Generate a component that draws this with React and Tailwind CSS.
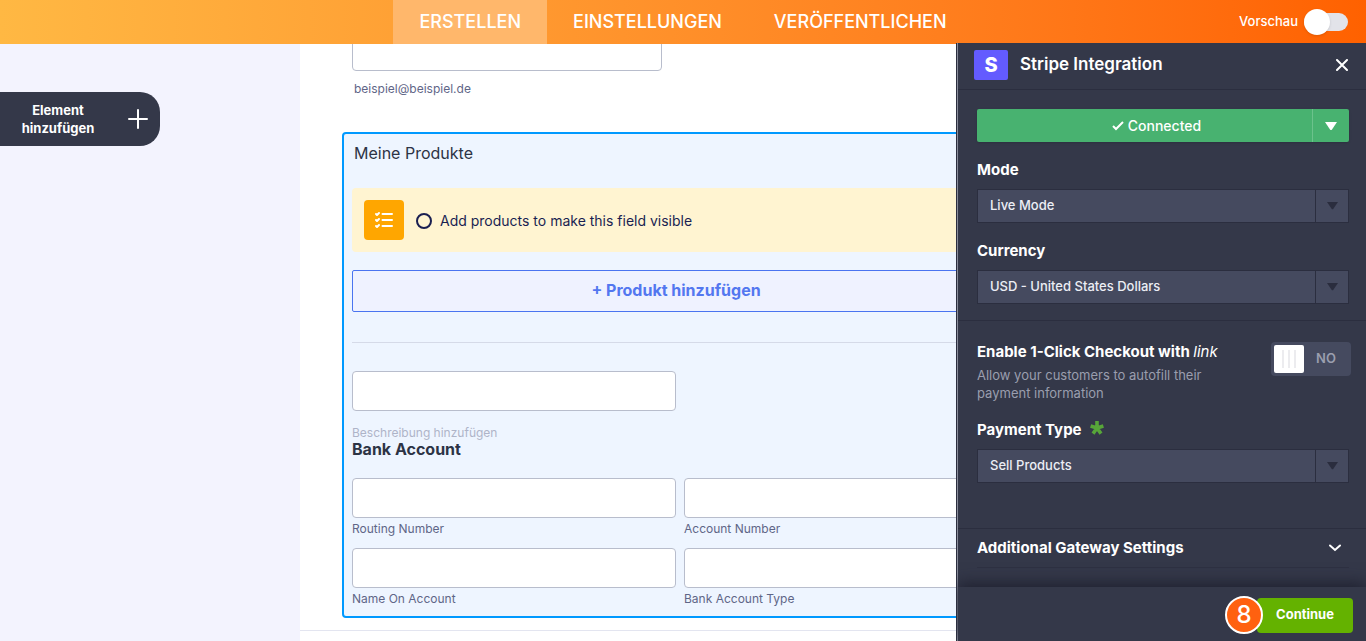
import React, { useState } from "react";

function Caret({ className }) {
  return (
    <svg viewBox="0 0 12 8" className={className} aria-hidden="true">
      <path d="M0 0h12L7 7.400a1.300 1.300 0 0 1-2 0z" fill="currentColor" />
    </svg>
  );
}

function TextField({ id, label, hidden }) {
  return (
    <div className="flex flex-col">
      <input
        id={id}
        type="text"
        aria-label={hidden ? label : undefined}
        className="h-10 w-full rounded border border-[#b8bdcc] bg-white px-2"
      />
      {!hidden && (
        <label htmlFor={id} className="pt-[3px] text-xs leading-4 text-[#5f6687]">
          {label}
        </label>
      )}
    </div>
  );
}

function PanelSelect({ id, options }) {
  return (
    <div className="relative flex h-[34px] border border-[#2b2e3f] bg-[#454a5f]">
      <select
        id={id}
        className="w-full appearance-none bg-transparent pl-3 pr-10 text-[13px] font-medium text-[#eceef5]"
      >
        {options.map((option) => (
          <option key={option}>{option}</option>
        ))}
      </select>
      <span className="pointer-events-none absolute inset-y-0 right-0 flex w-[33px] items-center justify-center border-l border-[#2b2e3f] text-[#2a2d3e]">
        <Caret className="w-[11px]" />
      </span>
    </div>
  );
}

function Header() {
  const [preview, setPreview] = useState(false);

  return (
    <header className="relative flex h-11 shrink-0 items-center justify-center bg-linear-to-r from-[#ffb843] to-[#ff6100]">
      <nav className="flex h-full text-lg font-medium text-white">
        <a href="#build" className="flex items-center bg-[#ffb76b] px-[26px]">
          ERSTELLEN
        </a>
        <a href="#settings" className="flex items-center px-[26px]">
          EINSTELLUNGEN
        </a>
        <a href="#publish" className="flex items-center px-[26px]">
          VERÖFFENTLICHEN
        </a>
      </nav>
      <label className="absolute inset-y-0 right-[18px] flex items-center gap-1.5 text-[13px] font-medium text-white">
        Vorschau
        <input
          type="checkbox"
          checked={preview}
          onChange={(e) => setPreview(e.target.checked)}
          className="peer sr-only"
        />
        <span className="flex h-[18px] w-11 items-center rounded-full bg-[#e2e3e9] peer-checked:justify-end">
          <span className="size-[26px] shrink-0 rounded-full bg-white shadow" />
        </span>
      </label>
    </header>
  );
}

function ChecklistIcon() {
  return (
    <svg viewBox="0 0 20 18" className="w-5" fill="none" stroke="white" strokeWidth="2" strokeLinecap="round" strokeLinejoin="round" aria-hidden="true">
      <path d="M8.500 3H18M8.500 9H18M8.500 15H18" />
      <path d="M2 3l1 1 2-2M2 9l1 1 2-2M2 15l1 1 2-2" />
    </svg>
  );
}

function ProductsField() {
  return (
    <section className="flex flex-col rounded border-2 border-[#0099ff] bg-[#eef5ff] px-2 pb-[9px] pt-[7px]">
      <h2 className="pl-0.5 text-base leading-6 text-[#2c3345]">Meine Produkte</h2>

      <div className="mt-[23px] flex h-16 items-center gap-3 rounded bg-[#fff4d1] px-3">
        <span className="flex size-10 items-center justify-center rounded bg-[#ffa600]">
          <ChecklistIcon />
        </span>
        <span className="flex items-center gap-2 pt-0.5 text-sm text-[#1a1f51]">
          <span className="size-4 rounded-full border-2 border-[#1a1f51]" />
          Add products to make this field visible
        </span>
      </div>

      <div className="mt-[18px] flex flex-col pr-2">
        <button
          type="button"
          className="h-[42px] rounded-xs border border-[#4a74f0] bg-[#eff2ff] pb-0.5 text-base font-bold text-[#5377f0]"
        >
          + Produkt hinzufügen
        </button>
      </div>

      <hr className="mt-[30px] border-[#d5dae8]" />

      <div className="mt-7 grid grid-cols-2 gap-2">
        <TextField id="description" label="Beschreibung" hidden />
      </div>
      <p className="mt-3.5 text-xs leading-4 text-[#aeb4c8]">Beschreibung hinzufügen</p>
      <h3 className="text-base leading-4 font-bold text-[#2c3345]">Bank Account</h3>

      <div className="mt-[21px] grid grid-cols-2 gap-x-2 gap-y-[11px]">
        <TextField id="routing" label="Routing Number" />
        <TextField id="account-number" label="Account Number" />
        <TextField id="account-name" label="Name On Account" />
        <TextField id="account-type" label="Bank Account Type" />
      </div>
    </section>
  );
}

function StripePanel() {
  const [oneClick, setOneClick] = useState(false);

  return (
    <aside className="relative -mt-px flex w-[410px] shrink-0 flex-col overflow-hidden border-l border-[#2b2e3f] bg-[#343849] text-white">
      <div className="flex min-h-0 flex-1 flex-col border-l border-[#8a8d9b]">
        <div className="flex h-[47px] shrink-0 items-center border-b border-[#2b2e3f] px-4 pb-0.5">
          <span className="flex h-[30px] w-[34px] items-center justify-center rounded-xs bg-[#635bff] text-xl font-extrabold">
            S
          </span>
          <h2 className="ml-3 flex-1 text-[17px] font-semibold">Stripe Integration</h2>
          <button type="button" aria-label="Close" className="p-0.5">
            <svg viewBox="0 0 12 12" className="w-3" stroke="white" strokeWidth="2" strokeLinecap="round">
              <path d="M1 1l10 10M11 1L1 11" />
            </svg>
          </button>
        </div>

        <div className="flex flex-1 flex-col">
          <div className="flex flex-col pl-[19px] pr-[17px] pt-[19px]">
            <div className="flex h-[33px] rounded-xs bg-[#48b270] shadow">
              <button type="button" className="flex flex-1 items-center justify-center gap-1 pl-6 text-sm font-medium">
                <svg viewBox="0 0 12 10" className="w-3" fill="none" stroke="white" strokeWidth="2">
                  <path d="M1 5l3 3 7-7" />
                </svg>
                Connected
              </button>
              <button type="button" aria-label="Connection options" className="flex w-[37px] items-center justify-center border-l border-[#6cc28c]">
                <Caret className="w-3" />
              </button>
            </div>

            <label htmlFor="mode" className="mt-[18px] text-[15px] leading-5 font-bold">Mode</label>
            <div className="mt-[9px]">
              <PanelSelect id="mode" options={["Live Mode", "Test Mode"]} />
            </div>

            <label htmlFor="currency" className="mt-[18px] text-[15px] leading-5 font-bold">Currency</label>
            <div className="mt-[9px]">
              <PanelSelect id="currency" options={["USD - United States Dollars", "EUR - Euro"]} />
            </div>
          </div>

          <div className="mt-4 flex flex-col border-t border-[#2b2e3f] pl-[19px] pr-[15px] pt-[21px]">
            <label className="flex items-start justify-between">
              <span className="flex flex-col">
                <span className="text-[15px] leading-5 font-bold">
                  Enable 1-Click Checkout with <span className="font-normal italic">link</span>
                </span>
                <span className="mt-1 w-60 text-[13px] leading-[18px] text-[#9a9eae]">
                  Allow your customers to autofill their payment information
                </span>
              </span>
              <input
                type="checkbox"
                checked={oneClick}
                onChange={(e) => setOneClick(e.target.checked)}
                className="peer sr-only"
              />
              <span className="flex h-[34px] w-20 items-center rounded bg-[#454a5f] p-[3px] text-[13px] font-semibold text-[#9a9eae] peer-checked:flex-row-reverse">
                <span className="flex h-full w-[30px] items-center justify-center gap-1 rounded-xs bg-white">
                  <span className="h-[18px] w-0.5 bg-[#ececef]" />
                  <span className="h-[18px] w-0.5 bg-[#ececef]" />
                  <span className="h-[18px] w-0.5 bg-[#ececef]" />
                </span>
                <span className="flex-1 text-center">{oneClick ? "YES" : "NO"}</span>
              </span>
            </label>
          </div>

          <div className="mt-[18px] flex flex-col pl-[19px] pr-[17px]">
            <label htmlFor="payment-type" className="flex items-center gap-2 text-[15px] leading-5 font-bold">
              Payment Type
              <svg viewBox="0 0 14 14" className="mb-1 w-3.5" stroke="#57a639" strokeWidth="3.600" aria-hidden="true">
                <path d="M7 7V0M7 7L.6 5M7 7l6.400-2M7 7l-4 5.600M7 7l4 5.600" />
              </svg>
            </label>
            <div className="mt-[9px]">
              <PanelSelect id="payment-type" options={["Sell Products", "Sell Subscriptions"]} />
            </div>
          </div>

          <div className="mt-[45px] border-t border-[#2b2e3f] pl-[19px] pr-[17px]">
            <button type="button" className="flex h-[39px] w-full items-center justify-between border-b border-[#2e3142] pr-2 text-[15px] font-bold">
              Additional Gateway Settings
              <svg viewBox="0 0 12 8" className="w-3" fill="none" stroke="white" strokeWidth="2" strokeLinecap="round">
                <path d="M1 1.500l5 4.500 5-4.500" />
              </svg>
            </button>
          </div>
        </div>

        <footer className="flex h-[54px] shrink-0 items-center justify-end pr-[13px] pt-0.5 shadow-[0_-4px_14px_#202231]">
          <span className="z-10 -mr-1.5 flex size-[38px] items-center justify-center rounded-full border-2 border-white bg-[#ff6110] text-2xl font-medium">
            8
          </span>
          <button type="button" className="h-[35px] w-24 rounded bg-[#64b200] text-[13px] font-bold">
            Continue
          </button>
        </footer>
      </div>
    </aside>
  );
}

export default function App() {
  return (
    <div className="flex h-screen flex-col overflow-hidden bg-[#f3f3fe] font-[Inter,sans-serif]">
      <Header />
      <div className="flex min-h-0 flex-1">
        <div className="w-[300px] shrink-0 pt-12">
          <button
            type="button"
            className="flex h-[54px] w-40 items-center rounded-r-[20px] bg-[#343849] pr-3 text-white"
          >
            <span className="flex-1 text-[13px] leading-[18px] font-bold">Element<br />hinzufügen</span>
            <svg viewBox="0 0 20 20" className="ml-3 w-5" stroke="white" strokeWidth="2" strokeLinecap="round">
              <path d="M10 1v18M1 10h18" />
            </svg>
          </button>
        </div>

        <main className="min-w-0 flex-1 overflow-hidden">
          <form className="flow-root min-h-full w-[760px] bg-white shadow-sm">
            <div className="-mt-[13px] px-[42px]">
              <div className="flex flex-col px-2.5">
                <input
                  id="email"
                  type="email"
                  className="h-10 w-[310px] rounded border border-[#b8bdcc] bg-white px-2"
                />
                <label htmlFor="email" className="mt-2.5 pl-0.5 text-xs leading-4 text-[#5f6687]">
                  beispiel@beispiel.de
                </label>
              </div>
              <div className="mt-[35px]">
                <ProductsField />
              </div>
            </div>
            <hr className="mt-3 border-[#e3e5f0]" />
          </form>
        </main>

        <StripePanel />
      </div>
    </div>
  );
}
